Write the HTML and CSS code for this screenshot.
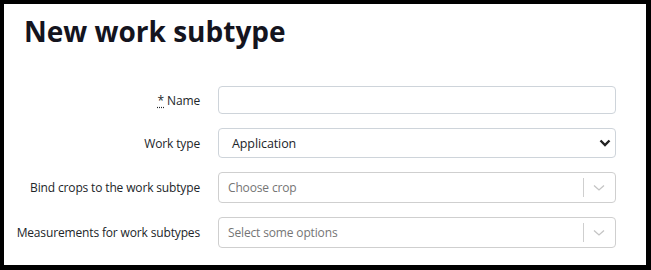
FILE: index.html
```html
<!DOCTYPE html>
<html lang="en">

<head>
  <meta charset="UTF-8">
  <title>New work subtype</title>
  <link rel="stylesheet" href="styles.css">
</head>

<body>
  <div class="frame">
    <h1>New work subtype</h1>

    <form class="form">
      <!-- Name -->
      <div class="row">
        <label class="label" for="name"><abbr title="required">*</abbr> Name</label>
        <input class="control" type="text" id="name">
      </div>

      <!-- Work type -->
      <div class="row">
        <label class="label" for="work-type">Work type</label>
        <div class="control select">
          <span>Application</span>
          <svg width="12" height="8" viewBox="0 0 12 8"><path d="M1.5 1.5 6 6l4.5-4.5" fill="none" stroke="#222" stroke-width="2.4"/></svg>
        </div>
      </div>

      <!-- Crops -->
      <div class="row">
        <label class="label">Bind crops to the work subtype</label>
        <div class="control chosen">
          <span class="placeholder">Choose crop</span>
          <span class="sep"></span>
          <svg class="arrow" width="12" height="8" viewBox="0 0 12 8"><path d="M1 1.5 6 6l5-4.5" fill="none" stroke="#c4c4c4" stroke-width="1.3"/></svg>
        </div>
      </div>

      <!-- Measurements -->
      <div class="row">
        <label class="label">Measurements for work subtypes</label>
        <div class="control chosen">
          <span class="placeholder">Select some options</span>
          <span class="sep"></span>
          <svg class="arrow" width="12" height="8" viewBox="0 0 12 8"><path d="M1 1.5 6 6l5-4.5" fill="none" stroke="#c4c4c4" stroke-width="1.3"/></svg>
        </div>
      </div>
    </form>
  </div>
</body>

</html>
```

FILE: styles.css
```css
/* Reset */
* {
  margin: 0;
  padding: 0;
  box-sizing: border-box;
}

body {
  background: #000;
  font-family: 'Open Sans', 'Noto Sans', sans-serif;
  color: #212529;
}

/* White card with the thick black edge */
.frame {
  width: 651px;
  height: 270px;
  background: #fff;
  border-style: solid;
  border-color: #000;
  border-width: 4px 5px 5px 4px;
  padding: 9px 30px 0 20px;
}

h1 {
  font-size: 28px;
  font-weight: 700;
  line-height: 36px;
  color: #14141e;
}

/* Form rows */
.form {
  margin-top: 37px;
  margin-left: -8px;
}

.row {
  display: grid;
  grid-template-columns: 184px 398px;
  column-gap: 18px;
  align-items: center;
  margin-bottom: 14px;
}

.label {
  text-align: right;
  white-space: nowrap;
  font-size: 12px;
  letter-spacing: -0.15px;
  color: #212529;
}

.label abbr {
  text-decoration: underline dotted;
  text-underline-offset: 2px;
}

.control {
  height: 28px;
  border: 1px solid #ced4da;
  border-radius: 4px;
  background: #fff;
  font-family: inherit;
}

.select {
  height: 30px;
  display: flex;
  align-items: center;
  justify-content: space-between;
  padding: 0 4px 0 13px;
  font-size: 12.5px;
  letter-spacing: -0.1px;
  color: #212529;
}

.chosen {
  height: 31px;
  display: flex;
  align-items: center;
  padding: 0 0 0 9px;
  border-color: #cfcfcf;
}

.placeholder {
  flex: 1;
  color: #757575;
  font-size: 12px;
  letter-spacing: -0.15px;
}

.sep {
  width: 1px;
  height: 19px;
  background: #cfcfcf;
}

.arrow {
  margin: 0 10px 0 9px;
}
```
